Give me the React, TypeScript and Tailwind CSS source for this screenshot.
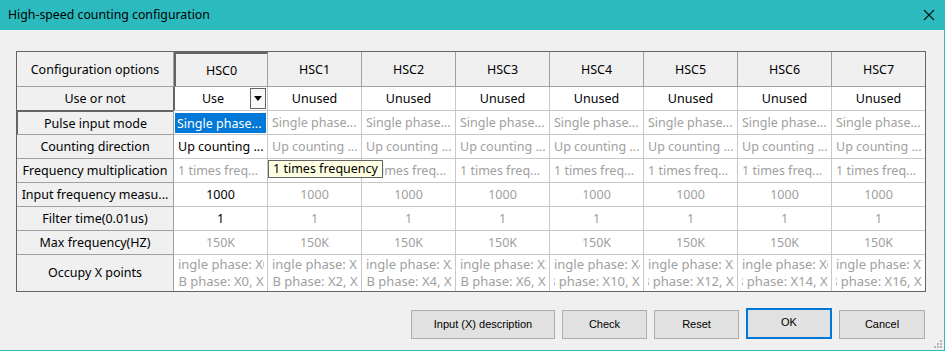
import React from 'react'

const cols = ['HSC0', 'HSC1', 'HSC2', 'HSC3', 'HSC4', 'HSC5', 'HSC6', 'HSC7']

const line1 = ['Single phase: X0', 'Single phase: X1', 'Single phase: X2', 'Single phase: X3', 'Single phase: X4', 'Single phase: X5', 'Single phase: X6', 'Single phase: X7']
const line2 = ['AB phase: X0, X1', 'AB phase: X2, X3', 'AB phase: X4, X5', 'AB phase: X6, X7', 'AB phase: X10, X11', 'AB phase: X12, X13', 'AB phase: X14, X15', 'AB phase: X16, X17']

const rowLabels = [
  'Use or not',
  'Pulse input mode',
  'Counting direction',
  'Frequency multiplication',
  'Input frequency measu...',
  'Filter time(0.01us)',
  'Max frequency(HZ)',
  'Occupy X points',
]

const head = 'flex items-center justify-center pt-[2px] bg-[#f0f0f0] border-r border-b border-[#a0a0a0] whitespace-nowrap '

function Cell({ children, className = '' }: { children?: React.ReactNode; className?: string }) {
  return <div className={'relative flex items-center overflow-hidden pt-[2px] border-r border-b border-[#c8c8c8] bg-white ' + className}>{children}</div>
}

export default function App() {
  return (
    <div className="w-[948px] h-[352px] bg-white" style={{ fontFamily: '"Noto Sans", Inter, sans-serif' }}>
      <div className="w-[945px] h-[351px] bg-[#f0f0f0] border-r border-b border-[#2bbbbf] flex flex-col">
        {/* title bar */}
        <div className="h-[30px] bg-[#2bbbbf] flex items-center justify-between pl-2 pr-[9px] shrink-0">
          <span className="text-[12.3px] text-black">High-speed counting configuration</span>
          <svg width="12" height="12" viewBox="0 0 12 12">
            <path d="M1 1L11 11M11 1L1 11" stroke="#111" strokeWidth="1.1" />
          </svg>
        </div>

        <div className="relative ml-4 mt-[21px] w-[910px] border border-[#646464] text-[12.5px] text-black">
          <div className="grid grid-cols-[157px_repeat(7,94px)_93px] grid-rows-[35px_24px_24px_24px_24px_24px_24px_24px_36px]">
            {/* header row */}
            <div className={head}>Configuration options</div>
            {cols.map((c, i) => (
              <div
                key={c}
                className={
                  'flex items-center justify-center pt-[2px] bg-[#f0f0f0] border-b border-[#a0a0a0] ' +
                  (i === 0 ? 'border-l-2 border-l-[#646464] border-t-2 border-t-[#646464] border-r ' : i < 7 ? 'border-r ' : '')
                }
              >
                {c}
              </div>
            ))}

            {/* use or not */}
            <div className={head}>{rowLabels[0]}</div>
            <Cell className="border-l-2 border-l-[#646464] -ml-px">
              <span className="w-[76px] text-center">Use</span>
              <div className="absolute right-[1px] top-[1px] w-[16px] h-[21px] border border-[#646464] bg-[#f8f8f8] flex items-center justify-center">
                <svg width="8" height="5" viewBox="0 0 8 5">
                  <path d="M0 0H8L4 5Z" fill="#000" />
                </svg>
              </div>
            </Cell>
            {cols.slice(1).map((c, i) => (
              <Cell key={c} className={'justify-center ' + (i === 6 ? 'border-r-0' : '')}>
                Unused
              </Cell>
            ))}

            {/* pulse input mode */}
            <div className={head + 'border-t-2 border-t-[#646464] border-l-2 border-l-[#646464] -mt-px -ml-px'}>{rowLabels[1]}</div>
            <Cell className="p-px">
              <div className="w-full h-full bg-[#0078d7] text-white flex items-center pl-[2px] pt-[2px] whitespace-nowrap">Single phase...</div>
            </Cell>
            {cols.slice(1).map((c, i) => (
              <Cell key={c} className={'pl-[4px] text-[#a0a0a0] whitespace-nowrap ' + (i === 6 ? 'border-r-0' : '')}>
                Single phase...
              </Cell>
            ))}

            {/* counting direction */}
            <div className={head}>{rowLabels[2]}</div>
            {cols.map((c, i) => (
              <Cell key={c} className={'pl-[4px] whitespace-nowrap ' + (i === 0 ? '' : 'text-[#a0a0a0] ') + (i === 7 ? 'border-r-0' : '')}>
                Up counting ...
              </Cell>
            ))}

            {/* frequency multiplication */}
            <div className={head}>{rowLabels[3]}</div>
            {cols.map((c, i) => (
              <Cell key={c} className={'pl-[4px] whitespace-nowrap text-[#a0a0a0] ' + (i === 7 ? 'border-r-0' : '')}>
                1 times freq...
              </Cell>
            ))}

            {/* input frequency */}
            <div className={head}>{rowLabels[4]}</div>
            {cols.map((c, i) => (
              <Cell key={c} className={'justify-center ' + (i === 0 ? '' : 'text-[#a0a0a0] ') + (i === 7 ? 'border-r-0' : '')}>
                1000
              </Cell>
            ))}

            {/* filter time */}
            <div className={head}>{rowLabels[5]}</div>
            {cols.map((c, i) => (
              <Cell key={c} className={'justify-center ' + (i === 0 ? '' : 'text-[#a0a0a0] ') + (i === 7 ? 'border-r-0' : '')}>
                1
              </Cell>
            ))}

            {/* max frequency */}
            <div className={head}>{rowLabels[6]}</div>
            {cols.map((c, i) => (
              <Cell key={c} className={'justify-center text-[#a0a0a0] ' + (i === 7 ? 'border-r-0' : '')}>
                150K
              </Cell>
            ))}

            {/* occupy */}
            <div className="flex items-center justify-center bg-[#f0f0f0] border-r border-[#a0a0a0]">{rowLabels[7]}</div>
            {cols.map((c, i) => (
              <div key={c} className={'flex justify-center bg-white ' + (i === 7 ? '' : 'border-r border-[#c8c8c8]')}>
                <div className="w-[86px] flex flex-col items-center justify-center overflow-hidden text-[#a0a0a0] text-[13px] leading-[17px] whitespace-nowrap">
                  <span>{line1[i]}</span>
                  <span>{line2[i]}</span>
                </div>
              </div>
            ))}
          </div>

          {/* tooltip */}
          <div className="absolute left-[251px] top-[108px] h-[18px] px-[4px] bg-[#ffffe1] border border-[#646464] flex items-center text-[12.5px] text-black whitespace-nowrap">
            1 times frequency
          </div>
        </div>

        {/* buttons */}
        <div className="flex justify-end gap-[7px] mt-[18px] mr-[19px] text-[11px] text-black" style={{ fontFamily: '"Liberation Sans", Arial, sans-serif' }}>
          <button className="w-[144px] h-[29px] bg-[#e1e1e1] border border-[#adadad]">Input (X) description</button>
          <button className="w-[85px] h-[29px] bg-[#e1e1e1] border border-[#adadad]">Check</button>
          <button className="w-[85px] h-[29px] bg-[#e1e1e1] border border-[#adadad]">Reset</button>
          <button className="w-[86px] h-[31px] -mt-[2px] bg-[#e1e1e1] border-2 border-[#0078d7] pb-[2px]">OK</button>
          <button className="w-[86px] h-[29px] bg-[#e1e1e1] border border-[#adadad]">Cancel</button>
        </div>

        <div className="flex justify-end pr-[2px] mt-auto pb-[2px]">
          <svg width="8" height="8" viewBox="0 0 8 8">
            <rect x="6" y="0" width="2" height="2" fill="#b8b8b8" />
            <rect x="3" y="3" width="2" height="2" fill="#b8b8b8" />
            <rect x="6" y="3" width="2" height="2" fill="#b8b8b8" />
            <rect x="0" y="6" width="2" height="2" fill="#b8b8b8" />
            <rect x="3" y="6" width="2" height="2" fill="#b8b8b8" />
            <rect x="6" y="6" width="2" height="2" fill="#b8b8b8" />
          </svg>
        </div>
      </div>
    </div>
  )
}
